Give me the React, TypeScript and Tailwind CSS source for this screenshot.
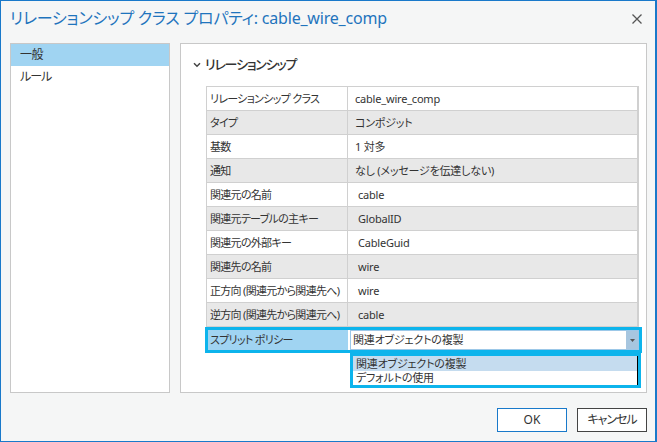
import React from "react";

const rows: { label: string; value: string; pad?: boolean }[] = [
  { label: "リレーションシップ クラス", value: "cable_wire_comp" },
  { label: "タイプ", value: "コンポジット" },
  { label: "基数", value: "1 対多" },
  { label: "通知", value: "なし (メッセージを伝達しない)" },
  { label: "関連元の名前", value: "cable", pad: true },
  { label: "関連元テーブルの主キー", value: "GlobalID", pad: true },
  { label: "関連元の外部キー", value: "CableGuid", pad: true },
  { label: "関連先の名前", value: "wire", pad: true },
  { label: "正方向 (関連元から関連先へ)", value: "wire", pad: true },
  { label: "逆方向 (関連先から関連元へ)", value: "cable", pad: true },
];

export default function App() {
  return (
    <div
      className="w-[657px] h-[442px] border border-r-2 border-[#1979ca] bg-[#f5f6f6] flex flex-col text-[#333] font-['Segoe_UI','Noto_Sans','Noto_Sans_CJK_JP',sans-serif] [font-feature-settings:'palt']"
    >
      {/* title */}
      <div className="h-[42px] flex items-start pt-[6px] pl-[9px] pr-[12px]">
        <div className="text-[16px] leading-[22px] text-[#1f74bd] flex-1 tracking-[-0.2px]">
          リレーションシップ クラス プロパティ: cable_wire_comp
        </div>
        <svg width="12" height="12" viewBox="0 0 12 12" className="mt-[6px]">
          <path d="M1.5 1.5 L10.5 10.5 M10.5 1.5 L1.5 10.5" stroke="#555" strokeWidth="1.3" />
        </svg>
      </div>

      {/* body */}
      <div className="flex pl-[9px] pr-[8px] gap-[10px] h-[350px]">
        <div className="w-[160px] border border-[#c8c8c8] bg-white flex flex-col">
          <div className="h-[22px] bg-[#a0d4f2] pl-[9px] text-[12px] leading-[22px] tracking-[-0.5px]">一般</div>
          <div className="h-[22px] pl-[9px] text-[12px] leading-[22px] tracking-[-1px]">ルール</div>
        </div>
        <div className="w-[467px] border border-[#c8c8c8] bg-white relative">
          <div className="flex items-center h-[20px] mt-[11px] pl-[12px] gap-[4px]">
            <svg width="8" height="6" viewBox="0 0 8 6">
              <path d="M1 1.2 L4 4.2 L7 1.2" stroke="#444" strokeWidth="1.5" fill="none" />
            </svg>
            <span className="text-[13px] font-medium text-[#333] tracking-[-1.2px]">リレーションシップ</span>
          </div>
          <div className="ml-[25px] mt-[11px] w-[433px] border-t border-l border-r-2 border-[#d0d0d0] text-[11px]">
            {rows.map((r, i) => (
              <div
                key={i}
                className={`flex h-[24px] border-b border-[#d0d0d0] ${i % 2 === 1 ? "bg-[#e8e8e8]" : "bg-white"}`}
              >
                <div className="w-[141px] border-r border-[#d0d0d0] pl-[3px] leading-[23px] whitespace-nowrap overflow-hidden tracking-[-0.7px]">
                  {r.label}
                </div>
                <div className={`flex-1 leading-[23px] whitespace-nowrap tracking-[-0.2px] ${r.pad ? "pl-[10px]" : "pl-[7px]"}`}>
                  {r.value}
                </div>
              </div>
            ))}
            <div className="h-[25px] relative">
              <div className="absolute left-[-2px] top-[0px] w-[437px] h-[26px] border-[3px] border-[#0db4ec] flex">
                <div className="w-[140px] bg-[#a0d4f2] leading-[20px] pl-[2px] whitespace-nowrap tracking-[-0.7px]">スプリット ポリシー</div>
                <div className="w-[2px] bg-white" />
                <div className="flex-1 bg-white border border-[#9cc8e8] flex">
                  <div className="flex-1 leading-[18px] pl-[2px] tracking-[-0.2px]">関連オブジェクトの複製</div>
                  <div className="w-[12px] bg-[#a7c6df] flex items-center justify-center">
                    <svg width="5" height="3" viewBox="0 0 5 3">
                      <path d="M0 0 L5 0 L2.5 3 Z" fill="#555" />
                    </svg>
                  </div>
                </div>
              </div>
            </div>
          </div>
          {/* dropdown list */}
          <div className="absolute left-[169px] top-[309px] w-[291px] h-[35px] border-[3px] border-[#0db4ec] bg-white text-[11px] tracking-[-0.2px]">
            <div className="h-full border-r border-black flex flex-col">
              <div className="h-[15px] bg-[#c5dcef] leading-[15px] pl-[3px]">関連オブジェクトの複製</div>
              <div className="h-[14px] leading-[14px] pl-[3px]">デフォルトの使用</div>
            </div>
          </div>
        </div>
      </div>

      {/* footer */}
      <div className="flex justify-end gap-[10px] pr-[8px] mt-[15px]">
        <button className="w-[70px] h-[24px] border border-[#1979ca] bg-white text-[12px] text-[#333]">OK</button>
        <button className="w-[70px] h-[24px] border border-[#444] bg-white text-[12px] text-[#333] tracking-[-1px]">キャンセル</button>
      </div>
    </div>
  );
}
